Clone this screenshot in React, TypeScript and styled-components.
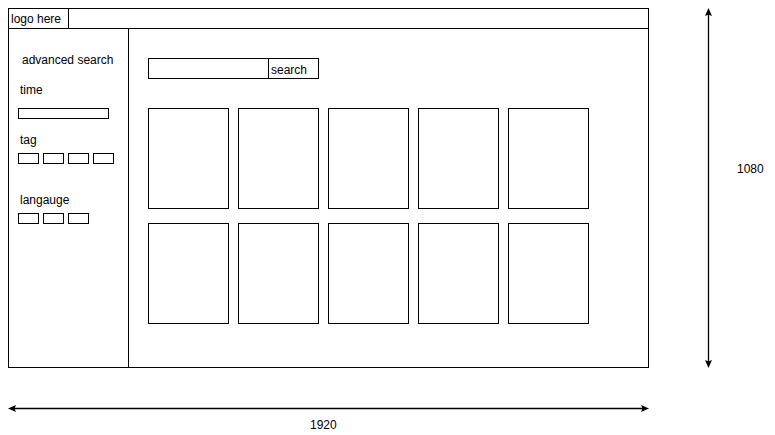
import React from 'react';
import styled, { createGlobalStyle } from 'styled-components';

const GlobalStyle = createGlobalStyle`
  * { box-sizing: border-box; }
  body {
    margin: 0;
    background: #ffffff;
    font-family: "Liberation Sans", Arial, sans-serif;
    font-size: 12px;
    color: #000000;
  }
`;

const Page = styled.div`
  display: flex;
  flex-direction: column;
  align-items: flex-start;
  padding: 8px;
`;

const TopRow = styled.div`
  display: flex;
  align-items: flex-start;
  flex-shrink: 0;
`;

// the wireframe itself
const Frame = styled.div`
  width: 641px;
  height: 360px;
  border: 1px solid #000;
  display: flex;
  flex-direction: column;
`;

const Header = styled.div`
  height: 20px;
  border-bottom: 1px solid #000;
  display: flex;
  flex-shrink: 0;
`;

const Logo = styled.div`
  width: 60px;
  border-right: 1px solid #000;
  padding: 1px 0 0 2px;
  line-height: 18px;
  white-space: nowrap;
`;

const Body = styled.div`
  flex: 1;
  display: flex;
  min-height: 0;
`;

const Sidebar = styled.aside`
  width: 120px;
  border-right: 1px solid #000;
  padding: 24px 0 0 9px;
  display: flex;
  flex-direction: column;
`;

const SideTitle = styled.div`
  margin-left: 4px;
  line-height: 14px;
  white-space: nowrap;
`;

const Section = styled.div<{ $gap: number }>`
  display: flex;
  flex-direction: column;
  margin-top: ${(p) => p.$gap}px;
`;

const Label = styled.div<{ $below: number }>`
  margin-left: 2px;
  line-height: 14px;
  margin-bottom: ${(p) => p.$below}px;
`;

const Slot = styled.div<{ $w: number }>`
  width: ${(p) => p.$w}px;
  height: 11px;
  border: 1px solid #000;
`;

const Chips = styled.div`
  display: flex;
  gap: 4px;
`;

const Main = styled.main`
  flex: 1;
  padding: 29px 19px;
`;

const SearchBar = styled.div`
  display: flex;
  height: 21px;
`;

const SearchInput = styled.div`
  width: 121px;
  border: 1px solid #000;
`;

const SearchButton = styled.div`
  width: 50px;
  border: 1px solid #000;
  border-left: none;
  padding: 3px 0 0 2px;
  line-height: 16px;
`;

const Grid = styled.div`
  margin-top: 29px;
  display: grid;
  grid-template-columns: repeat(5, 81px);
  column-gap: 9px;
  row-gap: 14px;
`;

const Card = styled.div`
  height: 101px;
  border: 1px solid #000;
`;

// dimension annotations
const VDim = styled.div`
  display: flex;
  align-items: flex-start;
`;

const VArrow = styled.svg`
  margin-left: 53px;
  display: block;
  flex-shrink: 0;
`;

const DimLabel = styled.div<{ $left: number; $top: number }>`
  margin-left: ${(p) => p.$left}px;
  margin-top: ${(p) => p.$top}px;
  line-height: 14px;
`;

const HArrow = styled.svg`
  display: block;
  flex-shrink: 0;
  margin-top: 35px;
`;

export default function App() {
  return (
    <>
      <GlobalStyle />
      <Page>
        <TopRow>
          <Frame>
            <Header>
              <Logo>logo here</Logo>
            </Header>
            <Body>
              <Sidebar>
                <SideTitle>advanced search</SideTitle>
                <Section $gap={16}>
                  <Label $below={11}>time</Label>
                  <Slot $w={91} />
                </Section>
                <Section $gap={14}>
                  <Label $below={6}>tag</Label>
                  <Chips>
                    {[0, 1, 2, 3].map((i) => <Slot key={i} $w={21} />)}
                  </Chips>
                </Section>
                <Section $gap={29}>
                  <Label $below={6}>langauge</Label>
                  <Chips>
                    {[0, 1, 2].map((i) => <Slot key={i} $w={21} />)}
                  </Chips>
                </Section>
              </Sidebar>
              <Main>
                <SearchBar>
                  <SearchInput />
                  <SearchButton>search</SearchButton>
                </SearchBar>
                <Grid>
                  {Array.from({ length: 10 }).map((_, i) => <Card key={i} />)}
                </Grid>
              </Main>
            </Body>
          </Frame>
          <VDim>
            <VArrow width="13" height="360" viewBox="0 0 13 360">
              <line x1="6.5" y1="4" x2="6.5" y2="356" stroke="#000" strokeWidth="1.3" />
              <path d="M6.5 0 L10 8 L6.5 6.5 L3 8 Z" fill="#000" />
              <path d="M6.5 360 L10 352 L6.5 353.5 L3 352 Z" fill="#000" />
            </VArrow>
            <DimLabel $left={22} $top={154}>1080</DimLabel>
          </VDim>
        </TopRow>
        <HArrow width="641" height="11" viewBox="0 0 641 11">
          <line x1="4" y1="5.5" x2="637" y2="5.5" stroke="#000" strokeWidth="1.3" />
          <path d="M0 5.5 L8 2 L6.5 5.5 L8 9 Z" fill="#000" />
          <path d="M641 5.5 L633 2 L634.5 5.5 L633 9 Z" fill="#000" />
        </HArrow>
        <DimLabel $left={302} $top={4}>1920</DimLabel>
      </Page>
    </>
  );
}
